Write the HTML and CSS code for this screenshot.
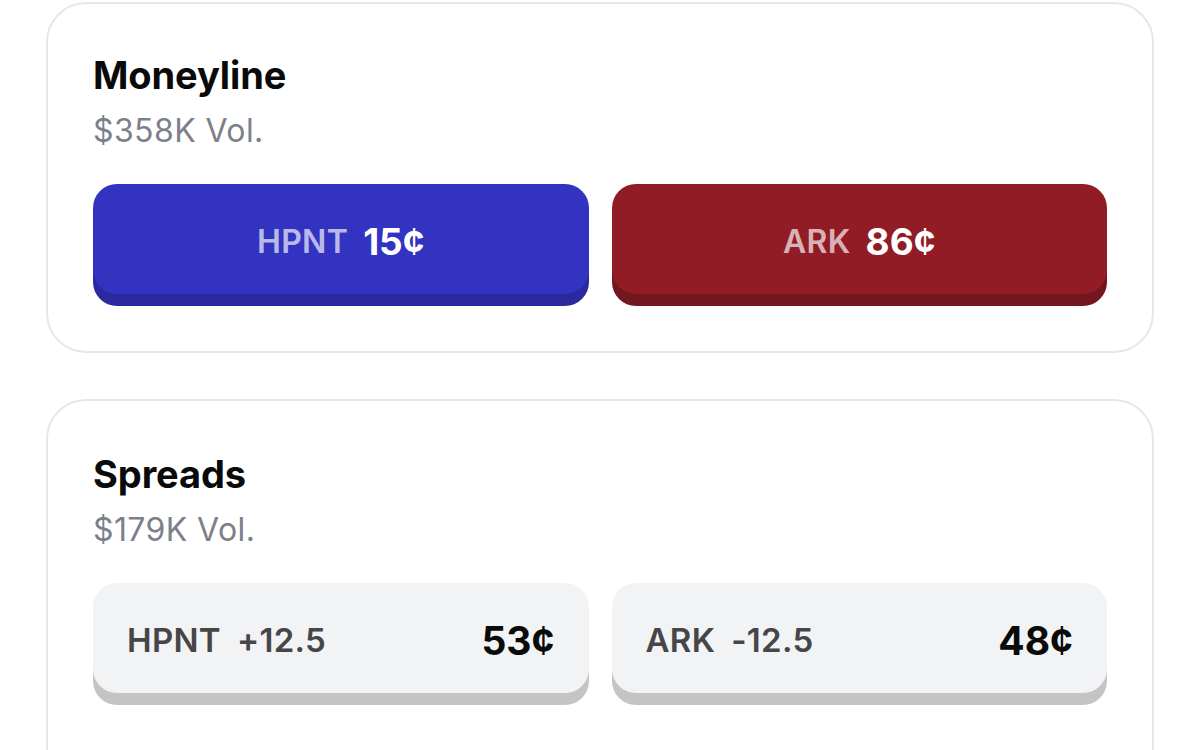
FILE: index.html
```html
<!DOCTYPE html>
<html lang="en">
<head>
<meta charset="utf-8">
<title>Markets</title>
<link rel="stylesheet" href="styles.css">
</head>
<body>
<main class="page">
  <section class="card">
    <h2 class="card-title">Moneyline</h2>
    <p class="card-vol">$358K Vol.</p>
    <div class="btn-row">
      <button class="bet bet-blue"><span class="team">HPNT</span><span class="price">15¢</span></button>
      <button class="bet bet-red"><span class="team">ARK</span><span class="price">86¢</span></button>
    </div>
  </section>
  <section class="card card-second">
    <h2 class="card-title">Spreads</h2>
    <p class="card-vol">$179K Vol.</p>
    <div class="btn-row">
      <button class="bet bet-gray"><span class="line"><span class="team">HPNT</span><span class="spread">+12.5</span></span><span class="price">53¢</span></button>
      <button class="bet bet-gray"><span class="line"><span class="team">ARK</span><span class="spread">-12.5</span></span><span class="price">48¢</span></button>
    </div>
  </section>
</main>
</body>
</html>
```

FILE: styles.css
```css
* { box-sizing: border-box; }
html, body { margin: 0; padding: 0; background: #ffffff; }
body {
  font-family: Inter, "Noto Sans", "Liberation Sans", sans-serif;
  width: 1200px;
  height: 750px;
  overflow: hidden;
}
.page {
  padding: 2px 46px 0 46px;
  display: flex;
  flex-direction: column;
  gap: 46px;
}
.card {
  border: 2px solid #e7e7ea;
  border-radius: 40px;
  padding: 48px 45px 57px 45px;
  background: #fff;
}
.card-second { padding-top: 50px; padding-bottom: 110px; }
.card-title {
  margin: 0;
  font-size: 38px;
  line-height: 46px;
  font-weight: 700;
  color: #0a0a0a;
  letter-spacing: -0.1px;
}
.card-vol {
  margin: 14px 0 0 0;
  font-size: 32px;
  line-height: 38px;
  font-weight: 400;
  color: #7c808b;
  letter-spacing: 0.4px;
}
.btn-row {
  margin-top: 34px;
  display: grid;
  grid-template-columns: 1fr 1fr;
  gap: 23px;
}
.bet {
  height: 110px;
  border: none;
  border-radius: 24px;
  font-family: inherit;
  display: flex;
  align-items: center;
  padding: 0 34px;
  cursor: pointer;
}
.bet-blue, .bet-red {
  justify-content: center;
  gap: 15px;
  padding-top: 4px;
}
.bet-blue { background: #3333c1; box-shadow: 0 12px 0 #2a2a9e; }
.bet-red { background: #911c26; box-shadow: 0 12px 0 #72161f; }
.bet-blue .team, .bet-red .team {
  font-size: 32px;
  font-weight: 600;
  color: rgba(255,255,255,0.68);
  letter-spacing: 0.3px;
}
.bet-blue .price, .bet-red .price {
  font-size: 37px;
  font-weight: 700;
  color: #ffffff;
}
.bet-gray {
  background: #f2f3f5;
  box-shadow: 0 12px 0 #c4c4c5;
  justify-content: space-between;
  padding-top: 4px;
}
.line { display: flex; gap: 16px; }
.bet-gray .team, .bet-gray .spread {
  font-size: 33px;
  font-weight: 600;
  color: #464648;
  letter-spacing: 0.3px;
}
.bet-gray .price {
  font-size: 39px;
  font-weight: 700;
  color: #0a0a0a;
}
```
